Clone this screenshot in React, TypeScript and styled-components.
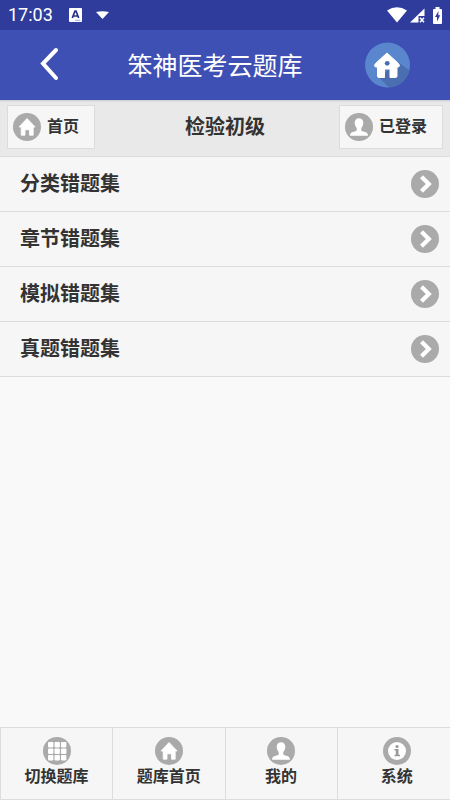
import React from "react";
import styled, { createGlobalStyle } from "styled-components";

const GlobalStyle = createGlobalStyle`
  *, *::before, *::after { box-sizing: border-box; }
  body {
    margin: 0;
    background: #f9f9f9;
    color: #333;
    font-family: Roboto, "Noto Sans CJK SC", sans-serif;
  }
  button { font: inherit; color: inherit; cursor: pointer; }
  svg { display: block; flex: none; }
`;

const Page = styled.div`
  display: flex;
  flex-direction: column;
  min-height: 100vh;
`;

const StatusBar = styled.div`
  display: flex;
  align-items: center;
  height: 30px;
  padding: 0 8px;
  background: #303c9c;
  color: #fff;
`;

const Clock = styled.time`
  font-size: 18px;
  line-height: 30px;
  font-weight: 400;
  margin-right: 16px;
`;

const StatusGroup = styled.div<{ $gap: number; $end?: boolean }>`
  display: flex;
  align-items: center;
  gap: ${(p) => p.$gap}px;
  margin-left: ${(p) => (p.$end ? "auto" : "0")};
`;

const AppBar = styled.header`
  display: grid;
  grid-template-columns: 100px 1fr 100px;
  align-items: center;
  height: 70px;
  padding-right: 12px;
  background: #3f50b4;
  color: #fff;
`;

const AppTitle = styled.h1`
  margin: 0;
  padding: 4px 8px 0 0;
  font-size: 25px;
  line-height: 36px;
  font-weight: 400;
  text-align: center;
  white-space: nowrap;
`;

const BarButton = styled.button`
  display: flex;
  align-items: center;
  justify-content: center;
  height: 70px;
  padding: 0;
  border: 0;
  background: none;
`;

const SubHeader = styled.div`
  display: grid;
  grid-template-columns: 1fr auto 1fr;
  align-items: start;
  height: 57px;
  padding: 5px 7px;
  border-bottom: 1px solid #dcdcdc;
  background: #e9e9e9;
  box-shadow: inset 0 2px 2px -1px #c8c8d0;
`;

const SubTitle = styled.h2`
  margin: 0;
  font-size: 20px;
  line-height: 44px;
  font-weight: 700;
`;

const HeaderLink = styled.a<{ $end?: boolean }>`
  display: flex;
  align-items: center;
  justify-self: ${(p) => (p.$end ? "end" : "start")};
  gap: 6px;
  height: 44px;
  padding: 0 15px 0 5px;
  border: 1px solid #dcdcdc;
  background: #f6f6f6;
  color: inherit;
  font-size: 16px;
  line-height: 24px;
  font-weight: 700;
  text-decoration: none;
`;

const List = styled.ul`
  flex: 1;
  margin: 0;
  padding: 0;
  list-style: none;
`;

const ListLink = styled.a`
  display: flex;
  align-items: center;
  justify-content: space-between;
  height: 55px;
  padding: 0 11px 0 20px;
  border-bottom: 1px solid #dcdcdc;
  background: #f6f6f6;
  color: inherit;
  font-size: 20px;
  line-height: 30px;
  font-weight: 700;
  text-decoration: none;
`;

const TabBar = styled.nav`
  display: grid;
  grid-template-columns: repeat(4, 1fr);
  height: 73px;
  border: 1px solid #dcdcdc;
  border-right: 0;
  background: #f6f6f6;
`;

const Tab = styled.a`
  display: flex;
  flex-direction: column;
  align-items: center;
  padding-top: 9px;
  border-right: 1px solid #dcdcdc;
  color: inherit;
  font-size: 16px;
  line-height: 24px;
  font-weight: 700;
  text-decoration: none;
  &:last-child {
    padding-left: 6px;
    border-right: 0;
  }
`;

type IconName = "home" | "user" | "grid" | "info" | "next";

const shapes: Record<IconName, React.ReactNode> = {
  home: (
    <path
      fill="#fff"
      stroke="#fff"
      strokeWidth="0.8"
      strokeLinejoin="round"
      d="M14 5.5 L6 14 H8.200 V22.200 H12 V16.800 H16.500 V22.200 H20.200 V14 H22.200 Z"
    />
  ),
  user: (
    <path
      fill="#fff"
      d="M14 5.300c-2.700 0-4.300 1.900-4.300 4.500 0 2.100.9 4.300 2 5.200v2.200c-.3.800-1.400 1.100-3 1.600-2.400.7-3.500 1.300-3.700 3.900h18c-.2-2.600-1.300-3.200-3.700-3.900-1.600-.5-2.700-.8-3-1.600V15c1.100-.9 2-3.100 2-5.200 0-2.600-1.600-4.500-4.300-4.500z"
    />
  ),
  grid: (
    <g fill="#fff">
      {[5, 11.5, 18].map((y) =>
        [5, 11.5, 18].map((x) => (
          <rect key={`${x}-${y}`} x={x} y={y} width="5.4" height="5.4" rx="0.8" />
        ))
      )}
    </g>
  ),
  info: (
    <>
      <circle cx="14" cy="14" r="9" fill="#fff" />
      <circle cx="14" cy="9.500" r="1.600" fill="#999" />
      <path fill="#999" d="M11.500 12H15.500V17.800H17V19.300H11.500V17.800H12.800V13.500H11.500Z" />
    </>
  ),
  next: (
    <path d="M10.500 6.800 L17.800 14 L10.500 21.200" fill="none" stroke="#fff" strokeWidth="4.200" />
  ),
};

function DiscIcon({ name }: { name: IconName }) {
  return (
    <svg width="28" height="28" viewBox="0 0 28 28" aria-hidden="true">
      <circle cx="14" cy="14" r="14" fill="#aaa" />
      {shapes[name]}
    </svg>
  );
}

const topics = ["分类错题集", "章节错题集", "模拟错题集", "真题错题集"];

const tabs: { label: string; icon: IconName }[] = [
  { label: "切换题库", icon: "grid" },
  { label: "题库首页", icon: "home" },
  { label: "我的", icon: "user" },
  { label: "系统", icon: "info" },
];

export default function App() {
  return (
    <Page>
      <GlobalStyle />
      <StatusBar>
        <Clock>17:03</Clock>
        <StatusGroup $gap={14}>
          <svg width="13" height="14" viewBox="0 0 13 14" aria-hidden="true">
            <rect width="13" height="14" rx="1" fill="#fff" />
            <path d="M3.300 10 L6 3 H7 L9.700 10 M4.500 8 H8.500" fill="none" stroke="#26308a" strokeWidth="1.700" />
            <path d="M6 12.300H11.500" stroke="#8f97cc" strokeWidth="0.800" />
          </svg>
          <svg width="13" height="8" viewBox="0 0 13 8" aria-hidden="true">
            <path d="M0 1 Q6.500 -0.500 13 1 L6.500 8Z" fill="#fff" />
          </svg>
        </StatusGroup>
        <StatusGroup $gap={3} $end>
          <svg width="20" height="16" viewBox="0 0 20 16" aria-hidden="true">
            <path d="M0 3.500 Q10 -2.800 20 3.500 L10 15.500Z" fill="#fff" />
          </svg>
          <svg width="20" height="16" viewBox="0 0 20 16" aria-hidden="true">
            <path d="M14.500 1.500 V9 H8.500 V15.500 H0Z" fill="#fff" />
            <path d="M10 10.800 L14 15.200 M14 10.800 L10 15.200" stroke="#fff" strokeWidth="1.500" />
          </svg>
          <svg width="9" height="17" viewBox="0 0 9 17" aria-hidden="true">
            <path d="M2.500 0 H6.500 V2 H8 Q9 2 9 3 V16 Q9 17 8 17 H1 Q0 17 0 16 V3 Q0 2 1 2 H2.500Z" fill="#fff" />
            <path d="M5.500 4 L2 10 H4 V14.500 L7.200 8.300 H5.300Z" fill="#303c9c" />
          </svg>
        </StatusGroup>
      </StatusBar>
      <AppBar>
        <BarButton type="button" aria-label="返回">
          <svg width="20" height="36" viewBox="0 0 20 36" aria-hidden="true">
            <path d="M16 3 L3 16.500 L16 31" fill="none" stroke="#fff" strokeWidth="4" strokeLinecap="round" />
          </svg>
        </BarButton>
        <AppTitle>笨神医考云题库</AppTitle>
        <BarButton type="button" aria-label="主页">
          <svg width="46" height="46" viewBox="0 0 46 46" aria-hidden="true">
            <circle cx="22.500" cy="23" r="22.500" fill="#5a86cd" />
            <path d="M33 20 L44.500 28.500 A22.500 22.500 0 0 1 24 45.400 L14 35.500Z" fill="#4a6eb0" />
            <path
              d="M22 11 L33.500 21.500 Q35.500 24 33.500 25 H32 V34 Q32 35.500 30.500 35.500 H25 V27 H19.500 V35.500 H14 Q12.500 35.500 12.500 34 V25 H10.500 Q8.500 24 10.500 21.500Z"
              fill="#fff"
              stroke="#fff"
              strokeLinejoin="round"
            />
            <circle cx="22.200" cy="21.300" r="2.400" fill="#4a6cb4" />
          </svg>
        </BarButton>
      </AppBar>
      <SubHeader>
        <HeaderLink href="#home">
          <DiscIcon name="home" />
          首页
        </HeaderLink>
        <SubTitle>检验初级</SubTitle>
        <HeaderLink href="#account" $end>
          <DiscIcon name="user" />
          已登录
        </HeaderLink>
      </SubHeader>
      <List>
        {topics.map((topic) => (
          <li key={topic}>
            <ListLink href="#topic">
              {topic}
              <DiscIcon name="next" />
            </ListLink>
          </li>
        ))}
      </List>
      <TabBar>
        {tabs.map((tab) => (
          <Tab key={tab.label} href="#tab">
            <DiscIcon name={tab.icon} />
            {tab.label}
          </Tab>
        ))}
      </TabBar>
    </Page>
  );
}
